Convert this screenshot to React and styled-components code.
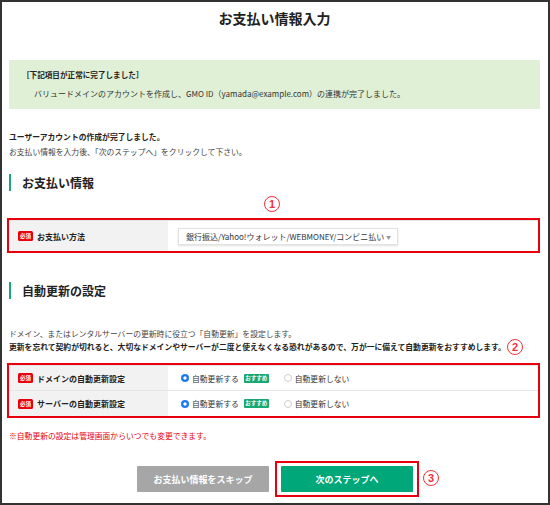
import styled, { createGlobalStyle } from 'styled-components';

const GlobalStyle = createGlobalStyle`
  body {
    margin: 0;
    background: #fff;
    font-family: "Noto Sans CJK JP", "Noto Sans", sans-serif;
    color: #333;
  }
`;

const Frame = styled.div`
  width: 550px;
  height: 505px;
  box-sizing: border-box;
  border: 2px solid #333;
  padding: 0 8px 0 7px;
  display: flex;
  flex-direction: column;
`;

const Title = styled.h1`
  margin: 0;
  padding-top: 8px;
  text-align: center;
  font-size: 14px;
  line-height: 16px;
  font-weight: 700;
  color: #222;
`;

const Notice = styled.div`
  margin-top: 34px;
  padding: 9px 13px;
  background: #dff0d6;
`;

const NoticeTitle = styled.div`
  font-size: 7.6px;
  line-height: 12px;
  font-weight: 700;
  color: #222;
`;

const NoticeText = styled.div`
  margin-top: 7px;
  padding-left: 12px;
  font-size: 8px;
  line-height: 12px;
`;

const Intro = styled.div`
  margin-top: 20px;
  font-size: 7.8px;
  line-height: 15px;
`;

const Line = styled.div`
  font-weight: ${(p) => (p.$bold ? 700 : 400)};
  color: ${(p) => (p.$bold ? '#222' : '#444')};
`;

const Heading = styled.h2`
  margin: ${(p) => p.$top}px 0 0;
  height: 17px;
  border-left: 2px solid #1aa872;
  padding-left: 11px;
  font-size: 12px;
  line-height: 17px;
  font-weight: 700;
  color: #222;
`;

const Highlight = styled.div`
  position: relative;
  margin: ${(p) => p.$top}px 0 0 -2px;
  border: 2px solid #e8000e;
`;

const Marker = styled.span`
  position: absolute;
  width: 14px;
  height: 14px;
  border: 1.5px solid #f0303a;
  border-radius: 50%;
  color: #f0303a;
  font-size: 11px;
  line-height: 14px;
  font-weight: 700;
  text-align: center;
  font-family: "Liberation Sans", sans-serif;
  box-sizing: content-box;
  top: ${(p) => p.$top};
  left: ${(p) => p.$left || 'auto'};
  right: ${(p) => p.$right || 'auto'};
`;

const Row = styled.div`
  display: grid;
  grid-template-columns: 159px 1fr;
  height: ${(p) => p.$h}px;
  border-top: 1px solid #e6e6e6;
  box-sizing: border-box;
`;

const LabelCell = styled.div`
  background: #f2f2f2;
  display: flex;
  align-items: center;
  gap: 4px;
  padding-left: 9px;
  font-size: 8px;
  font-weight: 700;
  color: #222;
`;

const Required = styled.span`
  display: inline-block;
  width: 15px;
  height: 10px;
  border-radius: 1.5px;
  background: #e8000e;
  color: #fff;
  font-size: 5.5px;
  line-height: 10px;
  text-align: center;
  font-weight: 700;
`;

const ValueCell = styled.div`
  display: flex;
  align-items: center;
  padding-left: ${(p) => p.$pad}px;
  font-size: 7.8px;
  color: #333;
`;

const Select = styled.div`
  width: 220px;
  height: 17px;
  box-sizing: border-box;
  border: 1px solid #e2e2e2;
  box-shadow: 0 1px 2px rgba(0, 0, 0, 0.12);
  background: #fff;
  display: flex;
  align-items: center;
  justify-content: space-between;
  padding: 0 6px 0 7px;
  font-size: 8px;
  color: #333;
`;

const Caret = styled.span`
  font-size: 5px;
  color: #999;
`;

const Radio = styled.span`
  display: inline-block;
  width: 8px;
  height: 8px;
  border-radius: 50%;
  box-sizing: border-box;
  margin-right: 3px;
  background: ${(p) =>
    p.$on ? 'radial-gradient(circle, #fff 0 1.4px, #1f7cf0 1.8px)' : '#fff'};
  border: ${(p) => (p.$on ? 'none' : '1px solid #cfcfcf')};
`;

const Recommend = styled.span`
  display: inline-block;
  margin: 0 15px 0 5px;
  width: 25px;
  height: 9px;
  border-radius: 1px;
  background: #1aa872;
  color: #fff;
  font-size: 5.5px;
  line-height: 9px;
  text-align: center;
  font-weight: 700;
`;

const Desc = styled.div`
  margin-top: 28px;
  font-size: 7.8px;
  line-height: 13px;
`;

const Note = styled.div`
  margin-top: 12px;
  font-size: 7.8px;
  line-height: 12px;
  color: #e8000e;
`;

const Actions = styled.div`
  margin-top: 24px;
  display: flex;
  justify-content: center;
  gap: 12px;
  padding-left: 1px;
`;

const Button = styled.button`
  width: 132px;
  height: 26px;
  border: none;
  border-radius: 1px;
  background: ${(p) => (p.$primary ? '#00a778' : '#a6a6a6')};
  color: #fff;
  font-family: inherit;
  font-size: 9px;
  font-weight: 700;
  padding: 0;
`;

const Outline = styled.div`
  position: relative;
  margin: -5px -6px;
  padding: 3px 4px;
  border: 2px solid #e8000e;
  display: flex;
`;

function AutoRenewRow({ label, first }) {
  return (
    <Row $h={first ? 25 : 26}>
      <LabelCell>
        <Required>必須</Required>
        {label}
      </LabelCell>
      <ValueCell $pad={13}>
        <Radio $on />
        自動更新する
        <Recommend>おすすめ</Recommend>
        <Radio />
        自動更新しない
      </ValueCell>
    </Row>
  );
}

export default function App() {
  return (
    <>
      <GlobalStyle />
      <Frame>
        <Title>お支払い情報入力</Title>
        <Notice>
          <NoticeTitle>［下記項目が正常に完了しました］</NoticeTitle>
          <NoticeText>
            バリュードメインのアカウントを作成し、GMO ID（yamada@example.com）の連携が完了しました。
          </NoticeText>
        </Notice>
        <Intro>
          <Line $bold>ユーザーアカウントの作成が完了しました。</Line>
          <Line>お支払い情報を入力後、「次のステップへ」をクリックして下さい。</Line>
        </Intro>

        <Heading $top={15}>お支払い情報</Heading>
        <Highlight $top={27}>
          <Marker $top="-24px" $left="255px">1</Marker>
          <Row $h={31}>
            <LabelCell>
              <Required>必須</Required>
              お支払い方法
            </LabelCell>
            <ValueCell $pad={10}>
              <Select>
                銀行振込/Yahoo!ウォレット/WEBMONEY/コンビニ払い
                <Caret>▼</Caret>
              </Select>
            </ValueCell>
          </Row>
        </Highlight>

        <Heading $top={29}>自動更新の設定</Heading>
        <Desc>
          <Line>ドメイン、またはレンタルサーバーの更新時に役立つ「自動更新」を設定します。</Line>
          <Line $bold>
            更新を忘れて契約が切れると、大切なドメインやサーバーが二度と使えなくなる恐れがあるので、万が一に備えて自動更新をおすすめします。
          </Line>
        </Desc>
        <Highlight $top={10}>
          <Marker $top="-26px" $right="15px">2</Marker>
          <AutoRenewRow label="ドメインの自動更新設定" first />
          <AutoRenewRow label="サーバーの自動更新設定" />
        </Highlight>
        <Note>※自動更新の設定は管理画面からいつでも変更できます。</Note>

        <Actions>
          <Button>お支払い情報をスキップ</Button>
          <Outline>
            <Button $primary>次のステップへ</Button>
            <Marker $top="7px" $left="calc(100% + 6px)">3</Marker>
          </Outline>
        </Actions>
      </Frame>
    </>
  );
}
